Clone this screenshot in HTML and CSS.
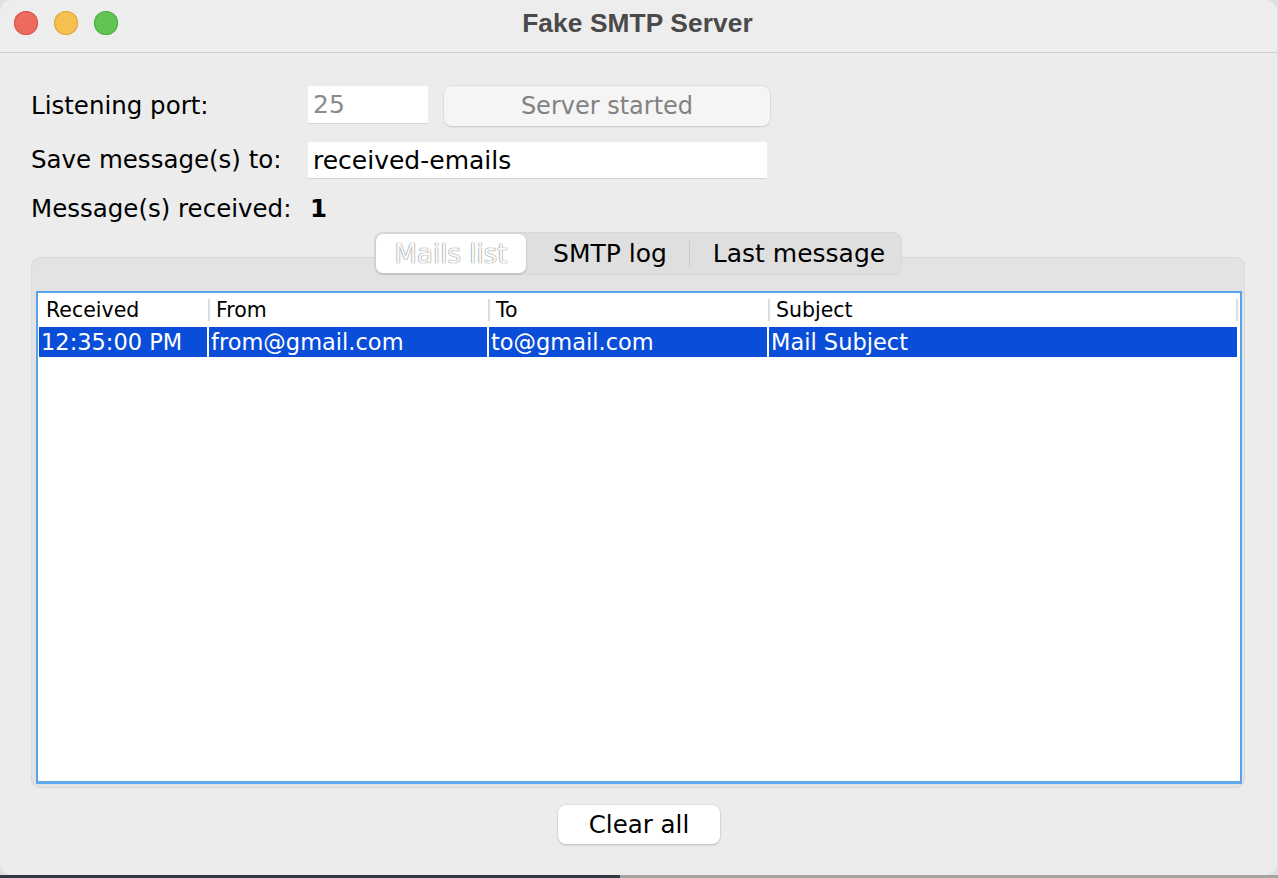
FILE: index.html
```html
<!DOCTYPE html>
<html>
<head>
<meta charset="utf-8">
<title>Fake SMTP Server</title>
<link rel="stylesheet" href="styles.css">
</head>
<body>
<div class="window">
  <header class="titlebar">
    <div class="lights">
      <span class="light red"></span>
      <span class="light yellow"></span>
      <span class="light green"></span>
    </div>
    <div class="title">Fake SMTP Server</div>
  </header>
  <main class="content">
    <div class="form">
      <div class="label">Listening port:</div>
      <div class="row">
        <div class="field port">25</div>
        <div class="btn disabled">Server started</div>
      </div>
      <div class="label">Save message(s) to:</div>
      <div class="row">
        <div class="field path">received-emails</div>
      </div>
      <div class="label">Message(s) received:</div>
      <div class="row"><span class="count">1</span></div>
    </div>

    <section class="tabs">
      <div class="segmented">
        <div class="seg selected">Mails list</div>
        <div class="seg">SMTP log</div>
        <div class="sep"></div>
        <div class="seg">Last message</div>
      </div>
      <div class="pane">
        <div class="scroll">
          <div class="thead">
            <div class="th first">Received</div>
            <div class="th">From</div>
            <div class="th">To</div>
            <div class="th last">Subject</div>
          </div>
          <div class="tr selected">
            <div class="td">12:35:00 PM</div>
            <div class="td">from@gmail.com</div>
            <div class="td">to@gmail.com</div>
            <div class="td">Mail Subject</div>
          </div>
        </div>
      </div>
    </section>

    <div class="actions">
      <div class="btn clear">Clear all</div>
    </div>
  </main>
</div>
</body>
</html>
```

FILE: styles.css
```css
* { box-sizing: border-box; }
html, body { margin: 0; padding: 0; }
body {
  width: 1278px;
  height: 878px;
  overflow: hidden;
  background:
    linear-gradient(#e0e0e0 0 875px, transparent 875px),
    linear-gradient(to right, #2e3943 0 620px, #a3a3a3 620px);
  font-family: "DejaVu Sans", "Noto Sans", sans-serif;
  color: #000;
}
.window {
  width: 1277px;
  height: 875px;
  background: #ececec;
  border-radius: 12px;
  display: flex;
  flex-direction: column;
  overflow: hidden;
}
.titlebar {
  height: 53px;
  flex: none;
  border-bottom: 1px solid #d0d0d0;
  background: #ededed;
  display: grid;
  grid-template-columns: 1fr auto 1fr;
  align-items: start;
}
.lights {
  display: flex;
  gap: 16px;
  padding-left: 14px;
  padding-top: 11px;
}
.light {
  width: 24px;
  height: 24px;
  border-radius: 50%;
  display: block;
}
.red { background: #ed6a5e; box-shadow: inset 0 0 0 1px #d5574c; }
.yellow { background: #f5c04f; box-shadow: inset 0 0 0 1px #dba73a; }
.green { background: #61c554; box-shadow: inset 0 0 0 1px #4ead42; }
.title {
  font-family: "Liberation Sans", Arial, sans-serif;
  font-weight: bold;
  font-size: 26.3px;
  line-height: 30px;
  padding-top: 8px;
  color: #4a4a4a;
  letter-spacing: 0.1px;
  padding-right: 2px;
}
.content {
  flex: 1;
  display: flex;
  flex-direction: column;
  padding-top: 33px;
}
.form {
  display: grid;
  grid-template-columns: 277px 1fr;
  grid-template-rows: 40px 36px 30px;
  row-gap: 16px;
  padding-left: 31px;
  align-items: center;
}
.label {
  font-size: 24.5px;
  line-height: 30px;
  white-space: nowrap;
}
.row {
  display: flex;
  align-items: flex-start;
  gap: 16px;
  height: 100%;
}
.form > .row:last-child { align-items: center; }
.field {
  background: #fff;
  font-size: 25px;
  padding-left: 5px;
  display: flex;
  align-items: center;
  box-shadow: 0 1px 0 #d4d4d4;
}
.field.port {
  width: 120px;
  height: 37px;
  color: #8a8a8a;
}
.field.path {
  width: 459px;
  height: 36px;
}
.count {
  font-weight: bold;
  font-size: 24.5px;
  line-height: 30px;
  padding-left: 2px;
}
.btn {
  border-radius: 8px;
  display: flex;
  align-items: center;
  justify-content: center;
  font-size: 24.5px;
}
.btn.disabled {
  width: 326px;
  height: 40px;
  background: #f5f5f5;
  color: #828282;
  font-size: 24px;
  box-shadow: 0 0 0 0.5px #d6d6d6, 0 1px 1.5px rgba(0,0,0,0.18);
}
.tabs {
  margin-top: 8px;
  padding: 0 32px 0 31px;
  display: flex;
  flex-direction: column;
  align-items: stretch;
}
.segmented {
  align-self: center;
  position: relative;
  z-index: 1;
  width: 528px;
  height: 43px;
  background: #dfdfdf;
  border-radius: 9px;
  box-shadow: inset 0 0 0 1px #d7d7d7;
  padding: 2px;
  display: flex;
  align-items: center;
}
.seg {
  height: 39px;
  display: flex;
  align-items: center;
  justify-content: center;
  font-size: 25px;
  color: #000;
  white-space: nowrap;
}
.seg:nth-child(1) { width: 150px; }
.seg:nth-child(2) { width: 163px; padding-left: 5px; }
.seg:nth-child(4) { flex: 1; padding-left: 8px; }
.seg.selected {
  background: #fff;
  border-radius: 7px;
  box-shadow: 0 0 0 0.5px #cfcfcf, 0 1px 2px rgba(0,0,0,0.25);
  color: #fafafa;
  font-size: 26px;
  text-shadow: 0 0 1px #6e6e6e, 0 0 1px #8a8a8a;
}
.sep {
  width: 1px;
  height: 25px;
  background: #c9c9c9;
}
.pane {
  margin-top: -18px;
  height: 531px;
  background: #e3e3e3;
  border: 1px solid #d9d9d9;
  border-radius: 9px;
  padding: 33px 2px 3px 4px;
}
.scroll {
  height: 100%;
  background: #fff;
  border: 2px solid #56a3ea;
  border-bottom: 3px solid #5eabee;
}
.thead, .tr {
  display: grid;
  grid-template-columns: 170px 280px 280px 468px;
}
.thead {
  height: 33px;
  align-items: center;
  font-size: 20.5px;
  grid-template-columns: 170px 280px 280px 470px;
}
.th {
  height: 22px;
  line-height: 22px;
  padding-left: 6px;
  border-left: 2px solid #dedede;
}
.th.first { border-left: none; padding-left: 8px; }
.th.last { border-right: 2px solid #dedede; }
.tr {
  height: 30px;
  margin-top: 1px;
  padding-left: 1px;
}
.td {
  background: #0a4dd8;
  color: #fff;
  font-size: 22.5px;
  line-height: 30px;
  padding-left: 2px;
  margin-right: 2px;
  white-space: nowrap;
  overflow: hidden;
}
.td:last-child { margin-right: 0; }
.actions {
  display: flex;
  justify-content: center;
  padding-top: 17px;
  padding-left: 1px;
}
.btn.clear {
  width: 162px;
  height: 39px;
  background: #fff;
  color: #000;
  box-shadow: 0 0 0 0.5px #d0d0d0, 0 1px 2px rgba(0,0,0,0.25);
}
```
